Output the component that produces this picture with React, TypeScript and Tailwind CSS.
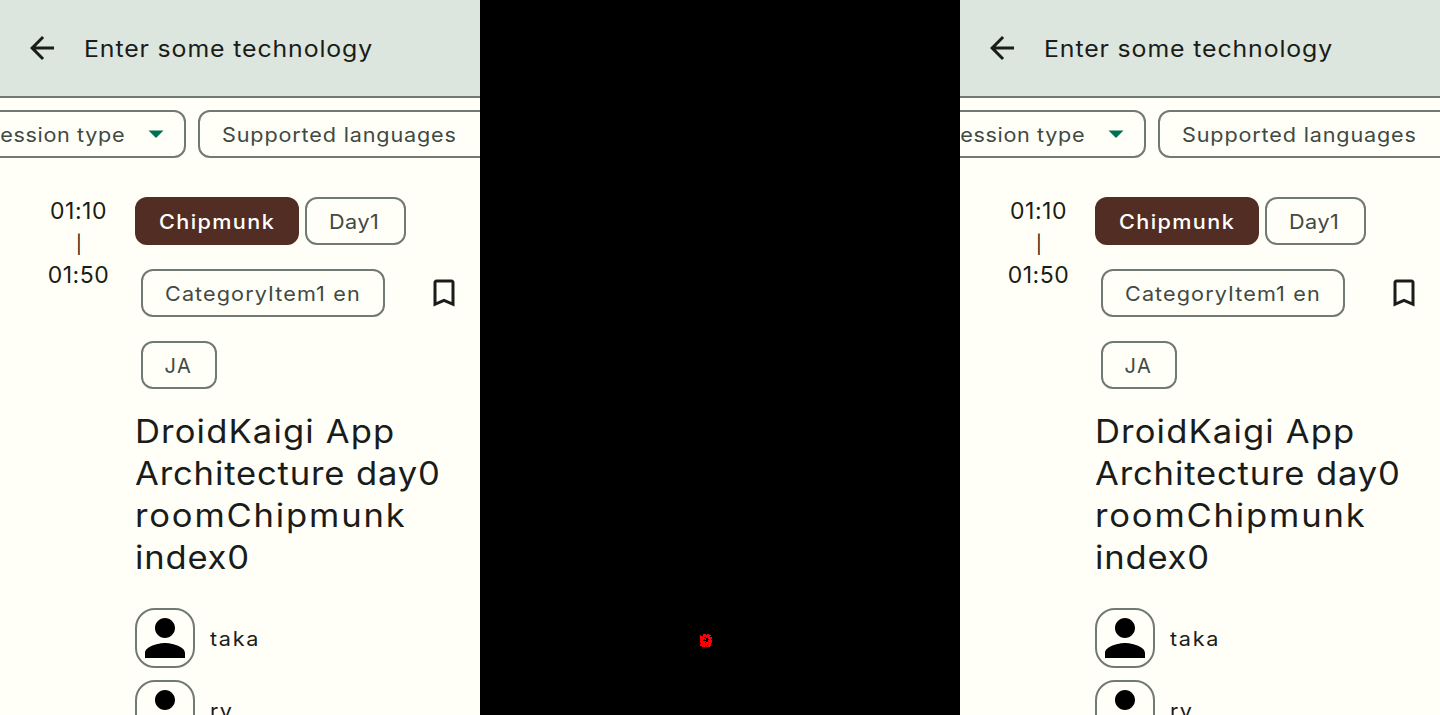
import type { ReactNode } from "react";

const MARK = [
  "...###.##...",
  "#..########.",
  "##########..",
  "####..######",
  "######..####",
  "####.#...##.",
  "###.....####",
  "######..####",
  "#####.######",
  ".##########.",
  "###########.",
  "#######.###.",
  "..###.####..",
];

function Wide({ className, children }: { className: string; children: ReactNode }) {
  return (
    <span className={`inline-block origin-left scale-x-108 whitespace-pre ${className}`}>{children}</span>
  );
}

function Chip({ className, children }: { className: string; children: ReactNode }) {
  return (
    <div
      className={`flex h-12 shrink-0 items-center rounded-xl border-2 pt-[2px] pl-[21.5px] text-[20px] leading-[30px] ${className}`}
    >
      {children}
    </div>
  );
}

function Triangle() {
  return (
    <svg className="mb-[2px] h-[8px] w-[16px] shrink-0" viewBox="0 0 16 8">
      <path d="M0.5 0.5h15L8 8z" fill="#007053" />
    </svg>
  );
}

function Speaker({ children }: { children: ReactNode }) {
  return (
    <div className="flex items-center text-[20px] leading-[30px]">
      <div className="h-[60px] w-[60px] shrink-0 overflow-hidden rounded-[20px] border-2 border-[#707973]">
        <svg className="-m-[2px] h-[60px] w-[60px]" viewBox="0 0 24 24">
          <path
            d="M12 12c2.21 0 4-1.79 4-4s-1.79-4-4-4-4 1.79-4 4 1.79 4 4 4zm0 2c-2.67 0-8 1.34-8 4v2h16v-2c0-2.66-5.33-4-8-4z"
            fill="#000"
          />
        </svg>
      </div>
      <div className="pt-px pl-[14.5px]">{children}</div>
    </div>
  );
}

function SearchScreen() {
  return (
    <section className="flex h-full w-[480px] shrink-0 flex-col overflow-hidden bg-[#fffff8] text-[#191c1a]">
      <header className="flex h-[98px] shrink-0 items-center border-b-2 border-[#707973] bg-[#dde6de] pl-6">
        <svg className="h-9 w-9 shrink-0" viewBox="0 0 24 24">
          <path d="M20 11H7.83l5.59-5.59L12 4l-8 8 8 8 1.41-1.41L7.83 13H20v-2z" fill="#191c1a" />
        </svg>
        <div className="pt-[2px] pl-6 text-[23px] leading-8">
          <Wide className="tracking-[0.82px]">Enter some technology</Wide>
        </div>
      </header>

      <div className="mt-3 flex shrink-0 gap-3 text-[#404944]">
        <Chip className="-ml-[34px] w-[220px] justify-end gap-[22px] border-[#707973] pr-[20.5px]">
          <span className="inline-block origin-right scale-x-108 tracking-[0.6px] whitespace-pre">Session type</span>
          <Triangle />
        </Chip>
        <Chip className="w-[330px] border-[#707973]">
          <Wide className="tracking-[0.78px]">Supported languages</Wide>
        </Chip>
      </div>

      <div className="mt-[37px] flex">
        <div className="flex w-[135px] shrink-0 flex-col items-center pl-[22px] text-[23px] leading-8">
          <span className="tracking-[0.54px]">01:10</span>
          <span className="inline-block h-8 scale-x-105 pt-[2px] text-[18px] leading-8">|</span>
          <span className="tracking-[0.54px]">01:50</span>
        </div>

        <div className="flex grow flex-col pt-[2px]">
          <div className="flex text-[#404944]">
            <div className="flex w-[285px] flex-col gap-6">
              <div className="flex gap-1.5">
                <Chip className="w-[164px] border-[#522d24] bg-[#522d24] font-medium text-white">
                  <Wide className="tracking-[1.3px]">Chipmunk</Wide>
                </Chip>
                <Chip className="w-[101px] border-[#707973]">
                  <Wide className="tracking-[0.46px]">Day1</Wide>
                </Chip>
              </div>
              <Chip className="ml-1.5 w-[244px] border-[#707973]">
                <Wide className="tracking-[1.02px]">CategoryItem1 en</Wide>
              </Chip>
              <Chip className="ml-1.5 w-[76px] border-[#707973]">
                <span className="tracking-[1.47px]">JA</span>
              </Chip>
            </div>
            <svg className="ml-[6px] h-9 w-9 shrink-0 self-center" viewBox="0 0 24 24">
              <path
                d="M17 3H7c-1.1 0-1.99.9-1.99 2L5 21l7-3 7 3V5c0-1.1-.9-2-2-2zm0 15l-5-2.18L7 18V5h10v13z"
                fill="#191c1a"
              />
            </svg>
          </div>

          <h1 className="mt-[22px] flex flex-col text-[32px] leading-[42px]">
            <Wide className="tracking-[1.08px]">DroidKaigi App</Wide>
            <Wide className="tracking-[0.8px]">Architecture day0</Wide>
            <Wide className="tracking-[1.7px]">roomChipmunk</Wide>
            <Wide className="tracking-[0.76px]">index0</Wide>
          </h1>

          <div className="mt-[29px] flex flex-col gap-3">
            <Speaker>
              <Wide className="tracking-[1.56px]">taka</Wide>
            </Speaker>
            <Speaker>
              <Wide className="tracking-[1.14px]">ry</Wide>
            </Speaker>
          </div>
        </div>
      </div>
    </section>
  );
}

export default function App() {
  return (
    <main className="flex h-[715px] w-[1440px] overflow-hidden bg-black font-['Inter',sans-serif]">
      <SearchScreen />
      <div className="flex w-[480px] shrink-0 items-start pt-[634px] pl-[220px]">
        <svg className="h-[13px] w-3" viewBox="0 0 12 13" shapeRendering="crispEdges">
          {MARK.flatMap((row, y) =>
            [...row].map((cell, x) =>
              cell === "#" ? <rect key={`${x}-${y}`} x={x} y={y} width="1" height="1" fill="#f00" /> : null,
            ),
          )}
        </svg>
      </div>
      <SearchScreen />
    </main>
  );
}
